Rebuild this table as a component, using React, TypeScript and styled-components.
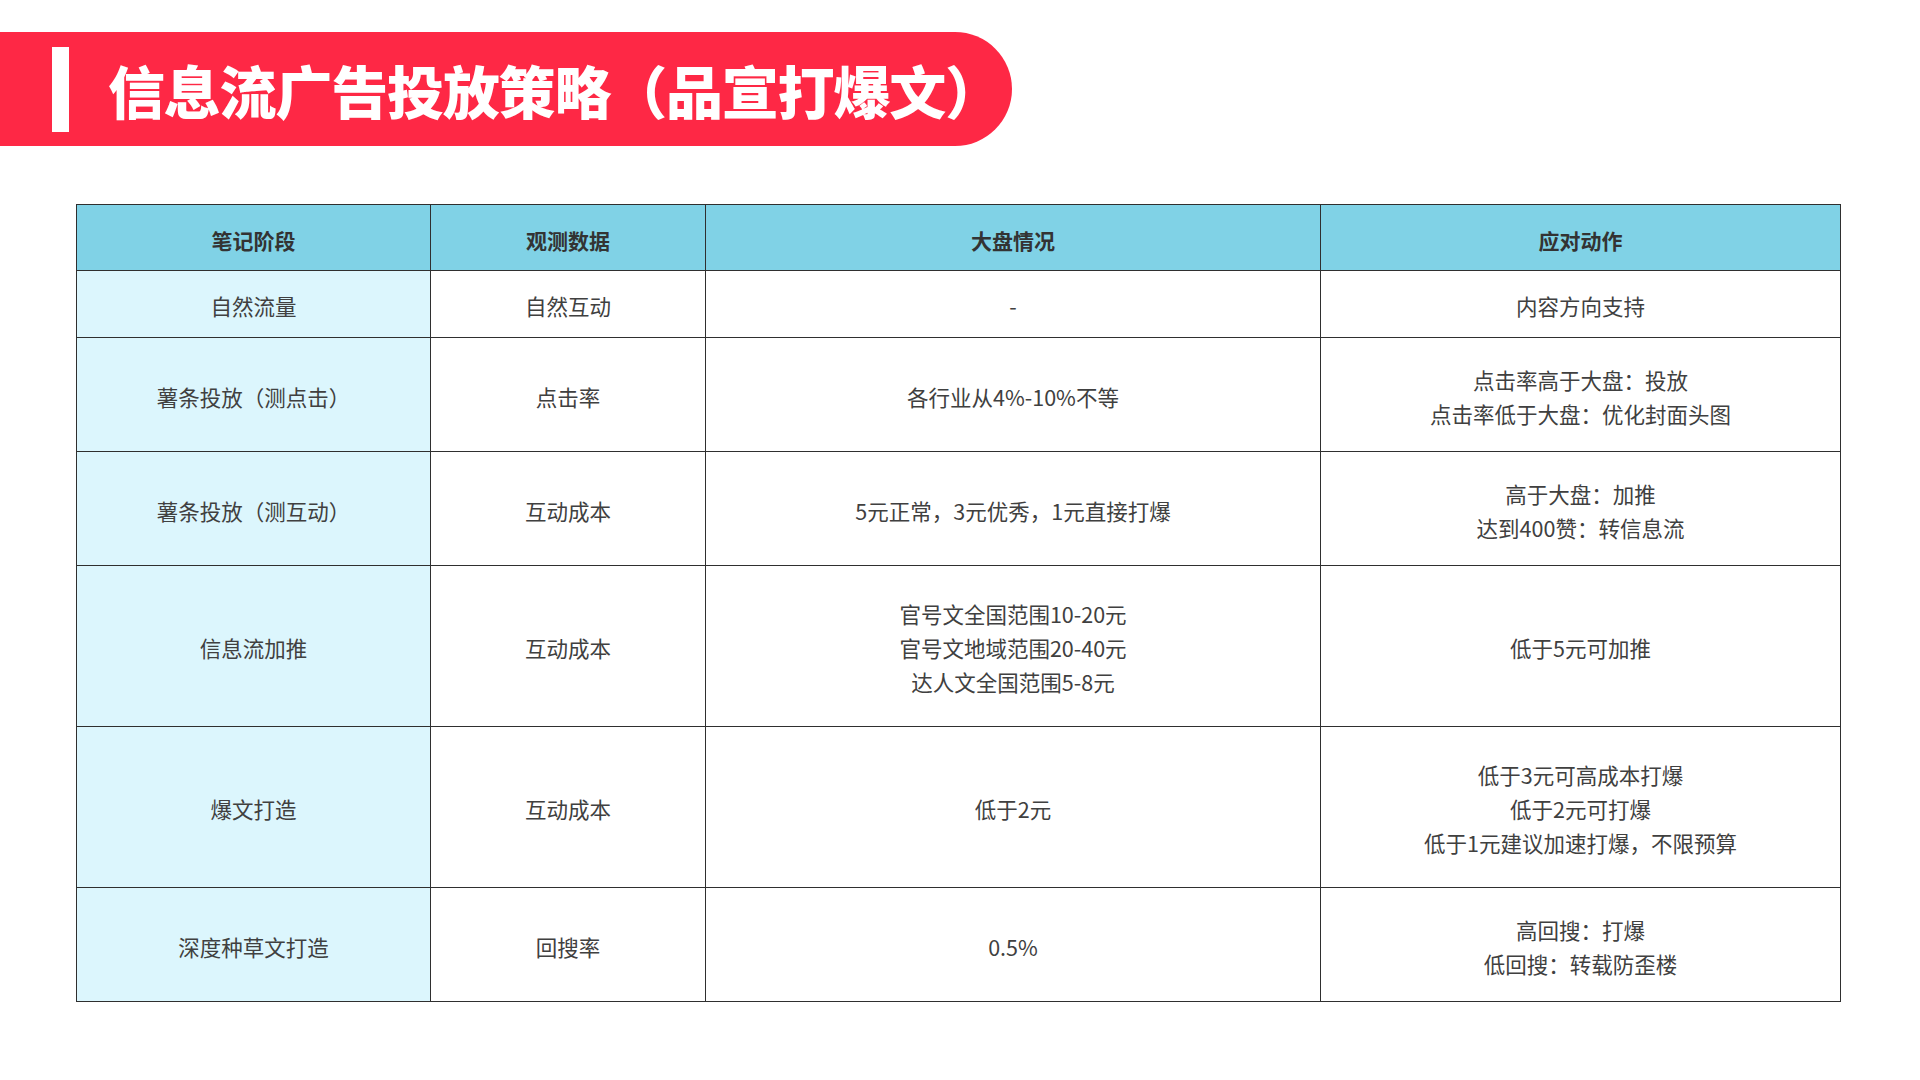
import React from 'react';
import styled, { createGlobalStyle } from 'styled-components';

const GlobalStyle = createGlobalStyle`
  html, body {
    margin: 0;
    padding: 0;
    background: #ffffff;
  }
  body {
    font-family: "Noto Sans CJK SC", "Noto Sans", sans-serif;
  }
`;

const Page = styled.div`
  width: 1920px;
  height: 1080px;
  padding-top: 32px;
  box-sizing: border-box;
  overflow: hidden;
`;

const Banner = styled.div`
  width: 1012px;
  height: 114px;
  background: #fe2845;
  border-radius: 0 57px 57px 0;
  display: flex;
  align-items: center;
  padding-left: 52px;
  gap: 39px;
  box-sizing: border-box;
`;

const Bar = styled.div`
  width: 17px;
  height: 85px;
  background: #ffffff;
`;

const Title = styled.h1`
  margin: 0;
  color: #ffffff;
  font-size: 57px;
  font-weight: 900;
  letter-spacing: -1.2px;
  line-height: 1;
  white-space: nowrap;
`;

const Table = styled.table`
  margin: 58px 0 0 76px;
  width: 1764px;
  border-collapse: collapse;
  table-layout: fixed;
`;

const Th = styled.th`
  background: #80d2e6;
  border: 1.5px solid #2f2f2f;
  color: #333333;
  font-size: 21px;
  font-weight: 700;
  height: 61px;
  box-sizing: border-box;
  padding: 5px 0 0;
  text-align: center;
  vertical-align: middle;
`;

const Td = styled.td<{ $stage?: boolean }>`
  background: ${(p) => (p.$stage ? '#dcf6fd' : '#ffffff')};
  border: 1.5px solid #2f2f2f;
  color: #404040;
  font-size: 21.5px;
  line-height: 34px;
  padding: 4px 0 0;
  text-align: center;
  vertical-align: middle;
`;

const Line = styled.div`
  white-space: nowrap;
`;

const rows = [
  { stage: '自然流量', metric: '自然互动', market: ['-'], action: ['内容方向支持'] },
  {
    stage: '薯条投放（测点击）',
    metric: '点击率',
    market: ['各行业从4%-10%不等'],
    action: ['点击率高于大盘：投放', '点击率低于大盘：优化封面头图'],
  },
  {
    stage: '薯条投放（测互动）',
    metric: '互动成本',
    market: ['5元正常，3元优秀，1元直接打爆'],
    action: ['高于大盘：加推', '达到400赞：转信息流'],
  },
  {
    stage: '信息流加推',
    metric: '互动成本',
    market: ['官号文全国范围10-20元', '官号文地域范围20-40元', '达人文全国范围5-8元'],
    action: ['低于5元可加推'],
  },
  {
    stage: '爆文打造',
    metric: '互动成本',
    market: ['低于2元'],
    action: ['低于3元可高成本打爆', '低于2元可打爆', '低于1元建议加速打爆，不限预算'],
  },
  {
    stage: '深度种草文打造',
    metric: '回搜率',
    market: ['0.5%'],
    action: ['高回搜：打爆', '低回搜：转载防歪楼'],
  },
];

const heights = [67, 114, 114, 161, 161, 114];

export default function App() {
  return (
    <Page>
      <GlobalStyle />
      <Banner>
        <Bar />
        <Title>信息流广告投放策略（品宣打爆文）</Title>
      </Banner>
      <Table>
        <colgroup>
          <col style={{ width: 354 }} />
          <col style={{ width: 275 }} />
          <col style={{ width: 615 }} />
          <col style={{ width: 520 }} />
        </colgroup>
        <thead>
          <tr style={{ height: 66 }}>
            <Th>笔记阶段</Th>
            <Th>观测数据</Th>
            <Th>大盘情况</Th>
            <Th>应对动作</Th>
          </tr>
        </thead>
        <tbody>
          {rows.map((r, i) => (
            <tr key={r.stage} style={{ height: heights[i] }}>
              <Td $stage>{r.stage}</Td>
              <Td>{r.metric}</Td>
              <Td>
                {r.market.map((m) => (
                  <Line key={m}>{m}</Line>
                ))}
              </Td>
              <Td>
                {r.action.map((a) => (
                  <Line key={a}>{a}</Line>
                ))}
              </Td>
            </tr>
          ))}
        </tbody>
      </Table>
    </Page>
  );
}
